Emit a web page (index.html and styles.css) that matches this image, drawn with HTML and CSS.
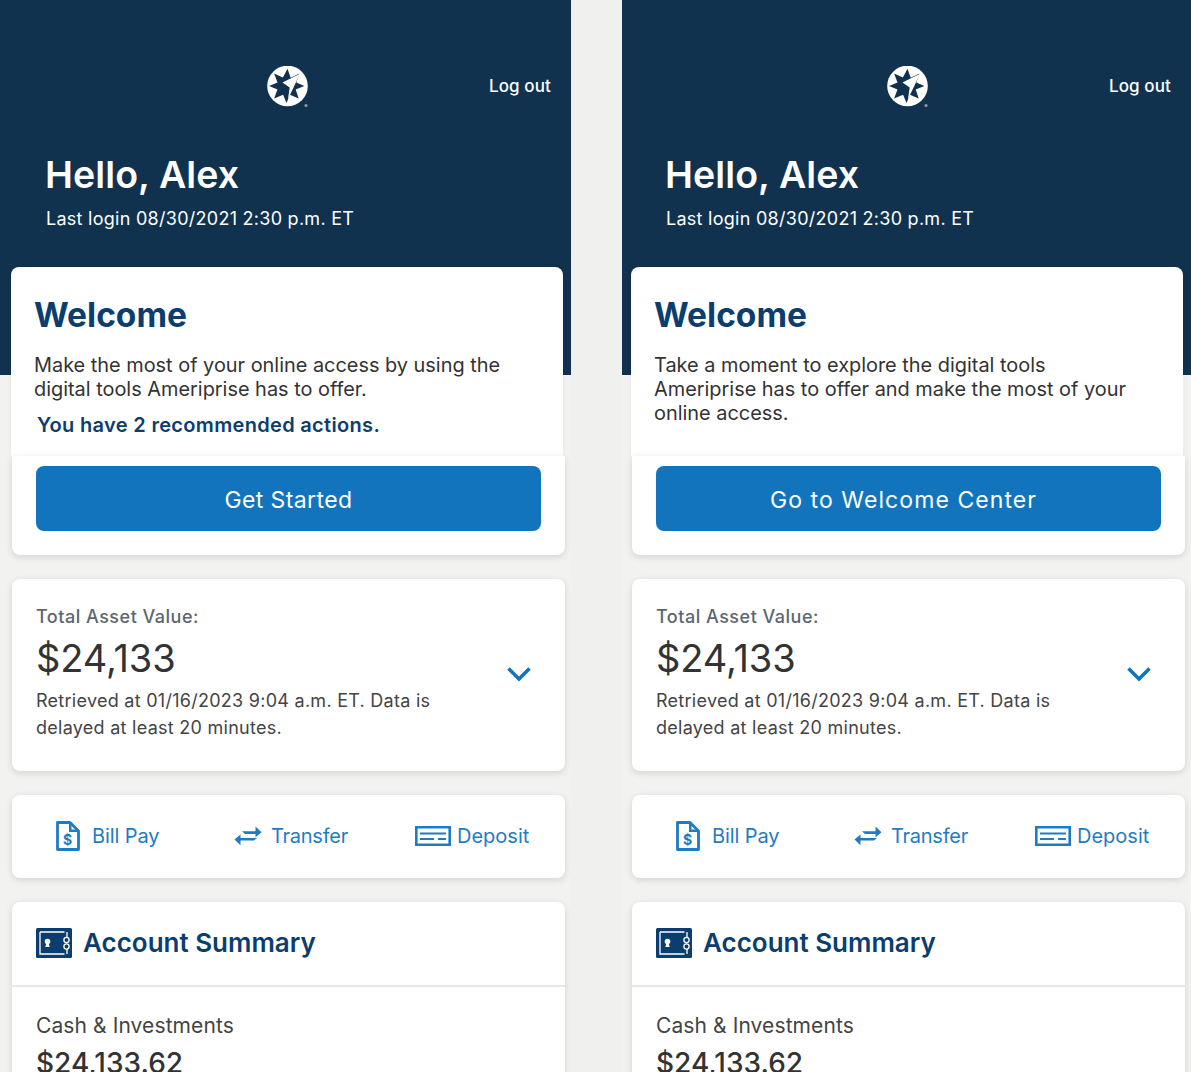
FILE: index.html
```html
<!DOCTYPE html>
<html lang="en">
<head>
<meta charset="utf-8">
<title>Ameriprise welcome</title>
<link rel="stylesheet" href="styles.css">
</head>
<body>
<svg class="defs" width="0" height="0" aria-hidden="true">
  <symbol id="logo" viewBox="0 0 44 44">
    <circle cx="20.500" cy="20" r="20.300" fill="#fff"/>
    <path fill="#10324e" d="M20.500 2.800l3.200 9 8.800-4.200-3.200 8.800 8 3.600-8.600 3.400 3 9.200-8.800-3.800-3.400 8.200-3.400-8.200-9 3.800 3.400-9.200-8.400-3.400 8.400-3.600-3.400-9 8.800 4z"/>
    <path fill="#fff" d="M33 7.800l-17.500 8.700 7.200 5-1.800 12z"/>
    <circle cx="39" cy="39.500" r="1.600" fill="#8b9aa8"/>
  </symbol>
  <symbol id="bill" viewBox="0 0 24 30">
    <path fill="none" stroke="currentColor" stroke-width="2.800" stroke-linejoin="round" d="M1.500 1.500h12.500l8.500 8.500v18.500h-21z"/>
    <path fill="currentColor" d="M13 1.500h2.500v7h7v2.500H13z"/>
    <text x="11.500" y="24" text-anchor="middle" class="dollar">$</text>
  </symbol>
  <symbol id="transfer" viewBox="0 0 28 20">
    <path fill="currentColor" d="M8 5.200h13.500V.5l6 5.800-6 5v-3.400H11zM20 14.600H6.500v4.700l-6-5.800 6-5v3.400H23z"/>
  </symbol>
  <symbol id="deposit" viewBox="0 0 36 20">
    <path fill="none" stroke="currentColor" stroke-width="2.600" d="M1.300 1.300h33.400v17.400H1.300z"/>
    <path fill="none" stroke="currentColor" stroke-width="2.200" d="M5 7.500h26M5 13h14M23 13h8"/>
  </symbol>
  <symbol id="vault" viewBox="0 0 36 30">
    <rect width="36" height="30" rx="1.500" fill="#0b3d6f"/>
    <path fill="none" stroke="#fff" stroke-width="1.300" d="M4 4h24.500M28.500 26H4V4M31 4v5M31 21v5"/>
    <circle cx="11.500" cy="13.500" r="2.800" fill="#fff"/>
    <path fill="#fff" d="M9.300 19l1.400-5h1.600l1.400 5z"/>
    <circle cx="30.500" cy="12" r="2.600" fill="none" stroke="#fff" stroke-width="1.300"/>
    <circle cx="30.500" cy="18.500" r="2.600" fill="none" stroke="#fff" stroke-width="1.300"/>
  </symbol>
</svg>
<main class="screens">
  <section class="phone phone-left">
    <header class="hero">
      <div class="topbar">
        <svg class="logo"><use href="#logo"/></svg>
        <a class="logout">Log out</a>
      </div>
      <h1 class="hello">Hello, Alex</h1>
      <p class="login">Last login 08/30/2021 2:30 p.m. ET</p>
    </header>
    <div class="content">
      <div class="card welcome">
        <h2 class="welcome-title">Welcome</h2>
        <p class="welcome-text">Make the most of your online access by using the digital tools Ameriprise has to offer.</p>
        <p class="actions">You have 2 recommended actions.</p>
      </div>
      <div class="card cta"><button class="btn">Get Started</button></div>
      <div class="card assets">
        <div class="asset-info">
          <div class="asset-label">Total Asset Value:</div>
          <div class="asset-value">$24,133</div>
          <p class="asset-note">Retrieved at 01/16/2023 9:04 a.m. ET. Data is delayed at least 20 minutes.</p>
        </div>
        <svg class="chevron" viewBox="0 0 24 16"><path d="M1.500 2.500l10.500 10.500 10.500-10.500" fill="none" stroke="currentColor" stroke-width="3.600"/></svg>
      </div>
      <nav class="card quick">
        <a class="quick-link link-bill"><svg class="ic-bill"><use href="#bill"/></svg>Bill Pay</a>
        <a class="quick-link link-transfer"><svg class="ic-transfer"><use href="#transfer"/></svg>Transfer</a>
        <a class="quick-link link-deposit"><svg class="ic-deposit"><use href="#deposit"/></svg>Deposit</a>
      </nav>
      <div class="card summary">
        <div class="summary-head"><svg class="ic-vault"><use href="#vault"/></svg><h2 class="summary-title">Account Summary</h2></div>
        <div class="summary-body">
          <div class="summary-label">Cash &amp; Investments</div>
          <div class="summary-value">$24,133.62</div>
        </div>
      </div>
    </div>
  </section>
  <section class="phone phone-right">
    <header class="hero">
      <div class="topbar">
        <svg class="logo"><use href="#logo"/></svg>
        <a class="logout">Log out</a>
      </div>
      <h1 class="hello">Hello, Alex</h1>
      <p class="login">Last login 08/30/2021 2:30 p.m. ET</p>
    </header>
    <div class="content">
      <div class="card welcome">
        <h2 class="welcome-title">Welcome</h2>
        <p class="welcome-text">Take a moment to explore the digital tools Ameriprise has to offer and make the most of your online access.</p>
      </div>
      <div class="card cta"><button class="btn btn-wide">Go to Welcome Center</button></div>
      <div class="card assets">
        <div class="asset-info">
          <div class="asset-label">Total Asset Value:</div>
          <div class="asset-value">$24,133</div>
          <p class="asset-note">Retrieved at 01/16/2023 9:04 a.m. ET. Data is delayed at least 20 minutes.</p>
        </div>
        <svg class="chevron" viewBox="0 0 24 16"><path d="M1.500 2.500l10.500 10.500 10.500-10.500" fill="none" stroke="currentColor" stroke-width="3.600"/></svg>
      </div>
      <nav class="card quick">
        <a class="quick-link link-bill"><svg class="ic-bill"><use href="#bill"/></svg>Bill Pay</a>
        <a class="quick-link link-transfer"><svg class="ic-transfer"><use href="#transfer"/></svg>Transfer</a>
        <a class="quick-link link-deposit"><svg class="ic-deposit"><use href="#deposit"/></svg>Deposit</a>
      </nav>
      <div class="card summary">
        <div class="summary-head"><svg class="ic-vault"><use href="#vault"/></svg><h2 class="summary-title">Account Summary</h2></div>
        <div class="summary-body">
          <div class="summary-label">Cash &amp; Investments</div>
          <div class="summary-value">$24,133.62</div>
        </div>
      </div>
    </div>
  </section>
</main>
</body>
</html>
```
FILE: styles.css
```css
* { box-sizing: border-box; }
html, body { margin: 0; height: 1072px; overflow: hidden; }
body { background: #f0f0ee; font-family: Inter, "Liberation Sans", sans-serif; color: #333; }
.defs { position: absolute; }
.dollar { font: 700 14px Inter, sans-serif; fill: currentColor; }
.screens { display: flex; justify-content: space-between; height: 1072px; }
.phone { flex: none; height: 1072px; overflow: hidden; background: #f2f2f0; }
.phone-left { width: 571px; }
.phone-right { width: 569px; }
.hero { height: 375px; background: #10324e; color: #fff; padding: 65px 20px 0 46px; }
.phone-right .hero { padding-left: 44px; }
.topbar { display: flex; justify-content: flex-end; align-items: center; height: 42px; position: relative; }
.logo { width: 44px; height: 44px; position: absolute; left: 221px; top: 1px; }
.logout { font-size: 17px; font-weight: 500; letter-spacing: .12px; }
.hello { margin: 46px 0 0 -1px; font-size: 37.500px; line-height: 44px; font-weight: 600; letter-spacing: .1px; }
.login { margin: 10px 0 0; font-size: 18px; line-height: 24px; letter-spacing: .27px; }
.content { margin-top: -108px; padding-left: 11px; position: relative; }
.phone-right .content { padding-left: 9px; }
.card { background: #fff; border-radius: 8px; margin-left: 1px; width: 553px; box-shadow: 0 2px 7px rgba(0,0,0,.13); }
.welcome { margin-left: 0; width: 552px; height: 189px; padding: 28px 23px 0; border-radius: 8px 8px 0 0; box-shadow: 0 0 5px rgba(0,0,0,.06); }
.welcome-title { margin: 0; font-size: 33.500px; line-height: 41px; font-weight: 700; color: #0b3d6f; }
.welcome-text { margin: 17px 0 0; max-width: 490px; font-size: 19.900px; line-height: 24px; color: #333; }
.actions { margin: 11px 0 0 3px; font-size: 20px; line-height: 26px; font-weight: 600; letter-spacing: .32px; color: #0b3d6f; }
.cta { height: 99px; padding: 10px 24px 0; border-radius: 0 0 8px 8px; }
.btn { display: block; width: 505px; height: 65px; padding: 2px 0 0; border: 0; border-radius: 8px; background: #1174bd; color: #fff; font: 400 23px Inter, sans-serif; letter-spacing: .4px; }
.btn-wide { padding-right: 10px; letter-spacing: 1.080px; }
.assets { margin-top: 24px; height: 192px; padding: 26px 24px 0; display: flex; justify-content: space-between; }
.asset-label { font-size: 18px; line-height: 24px; font-weight: 500; letter-spacing: .5px; color: #5c6670; }
.asset-value { font-size: 38px; line-height: 46px; margin-top: 6px; letter-spacing: -.1px; color: #333; }
.asset-note { margin: 6px 0 0; width: 420px; font-size: 18px; line-height: 27px; letter-spacing: .27px; color: #444; }
.chevron { width: 24px; height: 16px; margin: 61px 10px 0 0; color: #1174bd; }
.quick { margin-top: 24px; height: 83px; padding-bottom: 1px; display: flex; align-items: center; position: relative; color: #1f7cc4; font-size: 20px; }
.quick-link { display: flex; align-items: center; }
.link-bill { margin-left: 44px; width: 178px; letter-spacing: -.1px; }
.link-transfer { width: 181px; letter-spacing: -.25px; }
.ic-bill { width: 24px; height: 30px; margin-right: 12px; }
.ic-transfer { width: 28px; height: 20px; margin-right: 9px; }
.ic-deposit { width: 36px; height: 20px; margin-right: 6px; }
.summary { margin-top: 24px; height: 300px; }
.summary-head { height: 85px; padding: 0 0 2px 24px; display: flex; align-items: center; gap: 11px; border-bottom: 2px solid #e6e6e6; }
.ic-vault { width: 36px; height: 30px; }
.summary-title { margin: 0; font-size: 26px; font-weight: 600; color: #0b3d6f; }
.summary-body { padding: 25px 24px 0; }
.summary-label { font-size: 21px; line-height: 28px; letter-spacing: .1px; color: #444; }
.summary-value { font-size: 28px; line-height: 34px; font-weight: 500; margin-top: 6px; }
```
